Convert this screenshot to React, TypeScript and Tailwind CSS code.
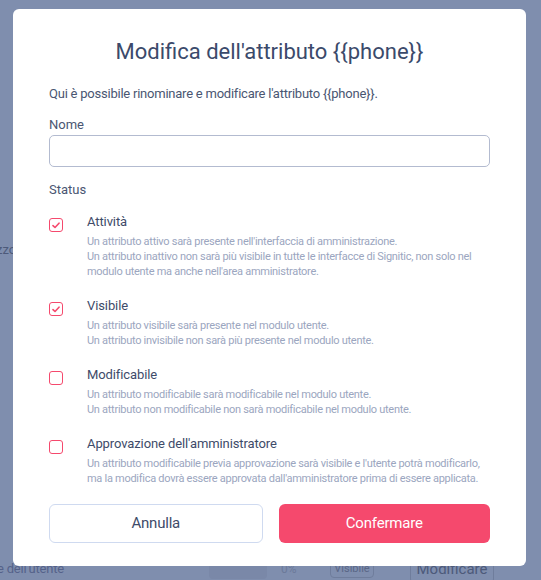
import React from "react";

const items = [
  {
    title: "Attività",
    checked: true,
    lines: [
      "Un attributo attivo sarà presente nell'interfaccia di amministrazione.",
      "Un attributo inattivo non sarà più visibile in tutte le interfacce di Signitic, non solo nel modulo utente ma anche nell'area amministratore.",
    ],
  },
  {
    title: "Visibile",
    checked: true,
    lines: [
      "Un attributo visibile sarà presente nel modulo utente.",
      "Un attributo invisibile non sarà più presente nel modulo utente.",
    ],
  },
  {
    title: "Modificabile",
    checked: false,
    lines: [
      "Un attributo modificabile sarà modificabile nel modulo utente.",
      "Un attributo non modificabile non sarà modificabile nel modulo utente.",
    ],
  },
  {
    title: "Approvazione dell'amministratore",
    checked: false,
    lines: [
      "Un attributo modificabile previa approvazione sarà visibile e l'utente potrà modificarlo, ma la modifica dovrà essere approvata dall'amministratore prima di essere applicata.",
    ],
  },
];

function Check({ checked }: { checked: boolean }) {
  return (
    <div className="w-[14px] h-[14px] rounded-[3px] border-[1.5px] border-[#f5496d] flex items-center justify-center bg-white">
      {checked && (
        <svg width="8" height="7" viewBox="0 0 8 7" fill="none">
          <path d="M1 3.6 L3 5.5 L7 1.2" stroke="#f5496d" strokeWidth="1.6" strokeLinecap="round" strokeLinejoin="round" />
        </svg>
      )}
    </div>
  );
}

export default function App() {
  return (
    <div
      className="relative w-[541px] h-[580px] overflow-hidden bg-[#7f8eae]"
      style={{ fontFamily: "Roboto, 'Liberation Sans', sans-serif" }}
    >
      {/* page underneath the overlay */}
      <div className="flex flex-col h-full">
        <div className="mt-[242px] -ml-[4px] text-[13px] leading-[16px] text-[#4d5a7a]">zzo</div>
        <div className="mt-auto mb-[-4px] flex items-center h-[30px] text-[#4d5a7a]">
          <div className="w-[209px] -ml-[3px] text-[13px] tracking-[-0.2px] text-[#55628a]">e dell'utente</div>
          <div className="ml-[3px] w-[58px] h-[20px] rounded bg-[#7a88a8]"></div>
          <div className="ml-[14px] w-[49px] text-[12px] text-[#6c7a9a]">0%</div>
          <div className="w-[44px] flex justify-center rounded-[4px] border border-[#6f7d9c] text-[11px] text-[#5a6787]">Visibile</div>
          <div className="ml-[36px] w-[84px] h-[30px] flex items-center justify-center rounded-[5px] border border-[#6f7d9c] text-[15px]">Modificare</div>
        </div>
      </div>

      {/* modal */}
      <div className="absolute left-[13px] top-[9px] w-[513px] h-[557px] bg-white rounded-[6px] px-[36px] pt-[29px]">
        <h1 className="text-center text-[22px] leading-[28px] text-[#3b4a6b] font-normal">
          Modifica dell'attributo {"{{phone}}"}
        </h1>
        <p className="mt-[20px] text-[13px] leading-[16px] text-[#4a5672] tracking-[-0.23px]">
          Qui è possibile rinominare e modificare l'attributo {"{{phone}}"}.
        </p>
        <div className="mt-[15px] text-[13px] leading-[16px] text-[#4a5672]">Nome</div>
        <div className="mt-[2px] h-[32px] rounded-[5px] border border-[#b3bbd0]"></div>
        <div className="mt-[15px] text-[13px] leading-[16px] text-[#4a5672]">Status</div>
        <div className="mt-[11px] flex flex-col gap-[14px]">
          {items.map((it) => (
            <div key={it.title} className="flex">
              <div className="w-[38px] pt-[9px]">
                <Check checked={it.checked} />
              </div>
              <div className="flex-1">
                <div className="text-[13px] leading-[20px] text-[#3e4b69] pt-[3px] tracking-[-0.1px]">{it.title}</div>
                <div className="mt-[2px] text-[11px] leading-[15px] text-[#9ba6c0] tracking-[-0.28px]">
                  {it.lines.map((l) => (
                    <div key={l}>{l}</div>
                  ))}
                </div>
              </div>
            </div>
          ))}
        </div>
        <div className="mt-[18px] flex gap-[16px]">
          <button className="flex-1 h-[39px] rounded-[6px] border border-[#cfdaf0] text-[15px] text-[#3e4b69] bg-white tracking-[-0.2px]">
            Annulla
          </button>
          <button className="flex-1 h-[39px] rounded-[6px] bg-[#f5496d] text-[15px] text-white tracking-[-0.2px]">
            Confermare
          </button>
        </div>
      </div>
    </div>
  );
}
